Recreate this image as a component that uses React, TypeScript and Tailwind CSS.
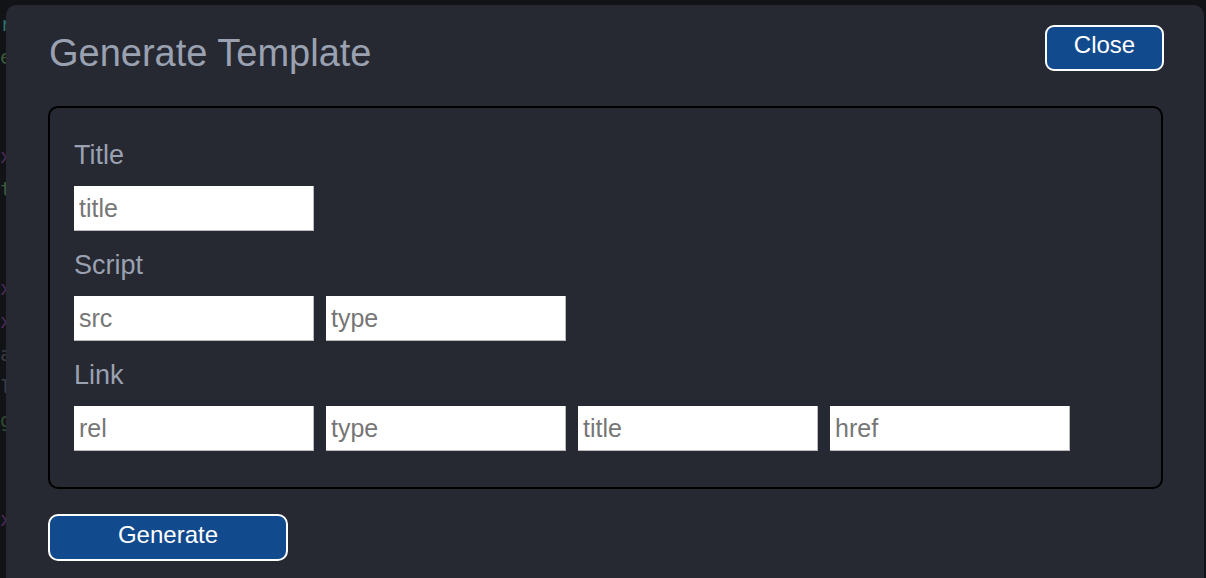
import React from 'react';

const font = { fontFamily: '"Liberation Sans", Arial, Helvetica, sans-serif' };

function Field({ placeholder }: { placeholder: string }) {
  return (
    <input
      placeholder={placeholder}
      className="w-[240px] h-[45px] bg-white pl-[5px] text-[25px] text-black placeholder:text-[#767676] border-r border-b border-[#bcbcbc] outline-none"
      style={font}
    />
  );
}

function Section({ label, fields, first }: { label: string; fields: string[]; first?: boolean }) {
  return (
    <div className={first ? '' : 'mt-[18px]'}>
      <div className="h-[32px] leading-[32px] text-[27px] text-[#9aa1b0]">{label}</div>
      <div className="mt-[15px] flex gap-[12px]">
        {fields.map((f, i) => (
          <Field key={i} placeholder={f} />
        ))}
      </div>
    </div>
  );
}

// faint code editor peeking out behind the modal
const codeRows = [
  { t: 'r', c: 'text-[#2f6f6a]' },
  { t: 'e', c: 'text-[#3f5a3a]' },
  { t: '', c: '' },
  { t: '', c: '' },
  { t: 'x', c: 'text-[#4b2a55]' },
  { t: 't', c: 'text-[#3f5a3a]' },
  { t: '', c: '' },
  { t: '', c: '' },
  { t: 'x', c: 'text-[#4b2a55]' },
  { t: 'x', c: 'text-[#4b2a55]' },
  { t: 'a', c: 'text-[#3a3d45]' },
  { t: 'l', c: 'text-[#3a3d45]' },
  { t: 'g', c: 'text-[#2f4a30]' },
  { t: '', c: '' },
  { t: '', c: '' },
  { t: 'x', c: 'text-[#4b2a55]' },
];

export default function App() {
  return (
    <div className="relative w-[1206px] h-[578px] overflow-hidden bg-[#121317]" style={font}>
      <div className="flex flex-col pt-[8px] text-[20px] leading-[33px]" style={{ fontFamily: '"DejaVu Sans Mono", monospace' }}>
        {codeRows.map((r, i) => (
          <div key={i} className={`h-[33px] ${r.c}`}>{r.t}</div>
        ))}
      </div>

      <div className="absolute left-[6px] top-[5px] w-[1198px] h-[600px] rounded-[10px] bg-[#262832] pl-[42px] pr-[40px] pt-[20px]">
        <div className="flex items-start justify-between">
          <h1 className="ml-[1px] mt-[6px] h-[44px] leading-[44px] text-[38px] font-normal text-[#9aa1b0]">Generate Template</h1>
          <button className="w-[119px] h-[46px] rounded-[9px] border-2 border-white bg-[#114a8d] text-white text-[24px] pb-[6px] flex items-center justify-center">
            Close
          </button>
        </div>

        <div className="mt-[31px] w-[1115px] rounded-[10px] border-2 border-black pl-[24px] pt-[31px] pb-[36px]">
          <Section first label="Title" fields={['title']} />
          <Section label="Script" fields={['src', 'type']} />
          <Section label="Link" fields={['rel', 'type', 'title', 'href']} />
        </div>

        <button className="mt-[25px] w-[240px] h-[47px] rounded-[10px] border-2 border-white bg-[#114a8d] text-white text-[24px] pb-[5px] flex items-center justify-center">
          Generate
        </button>
      </div>
    </div>
  );
}
